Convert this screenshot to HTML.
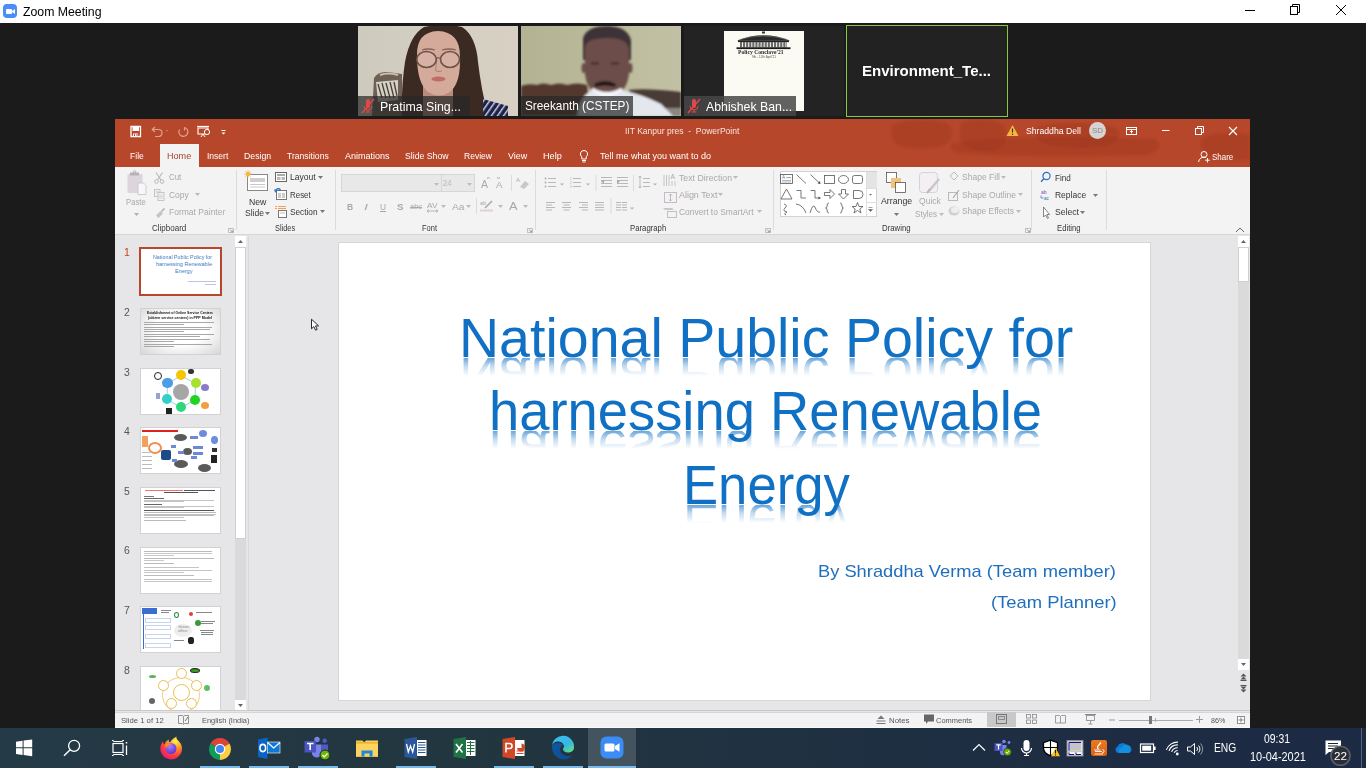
<!DOCTYPE html><html><head><meta charset="utf-8"><style>
html,body{margin:0;padding:0;width:1366px;height:768px;overflow:hidden;background:#1b1b1b;position:relative}
div,span,svg{position:absolute;box-sizing:border-box}
.t{white-space:pre;line-height:1;font-family:"Liberation Sans",sans-serif}
svg text{font-family:"Liberation Sans",sans-serif}
</style></head><body>
<div style="left:0px;top:0px;width:1366px;height:23px;background:#fff"></div>
<div style="left:3px;top:4px;width:14px;height:14px;background:#4a8ef7;border-radius:4px"></div>
<svg style="left:3px;top:4px;" width="14" height="14" viewBox="0 0 14 14"><rect x="3" y="5" width="6" height="5" rx="1" fill="#fff"/><path d="M9 7 L12 5 L12 10 L9 8Z" fill="#fff"/></svg>
<span class="t" style="left:23px;top:6.00px;font-size:12.3px;color:#000;transform:scaleX(0.9986);transform-origin:0 0;">Zoom Meeting</span>
<svg style="left:1240px;top:0px;" width="126" height="23" viewBox="0 0 126 23"><path d="M5 10.5H15" stroke="#000" stroke-width="1"/><rect x="50.5" y="6.5" width="7" height="8" fill="none" stroke="#000"/><path d="M52.5 6.5V4.5H59.5V12.5H57.5" fill="none" stroke="#000"/><path d="M96 5L106 15M106 5L96 15" stroke="#000" stroke-width="1"/></svg>
<svg style="left:358px;top:26px" width="160" height="90" viewBox="0 0 160 90"><defs><linearGradient id="v1bg" x1="0" x2="1"><stop offset="0" stop-color="#cecbbe"/><stop offset=".5" stop-color="#d3cfc2"/><stop offset="1" stop-color="#d8d0c2"/></linearGradient><filter id="bl1"><feGaussianBlur stdDeviation=".7"/></filter><pattern id="stp" width="5" height="5" patternUnits="userSpaceOnUse" patternTransform="rotate(35)"><rect width="5" height="5" fill="#1e2248"/><rect width="1.5" height="5" fill="#c8cce0"/></pattern></defs><rect width="160" height="90" fill="url(#v1bg)"/><g filter="url(#bl1)"><path d="M14 90L16 52Q20 45 30 46L44 48V90Z" fill="#6e6052"/><path d="M18 56L40 54V74L20 76Z" fill="#d4d0c6"/><path d="M20 58L24 72M24 57L28 72M28 57L32 72M32 56L36 72M36 56L39 70" stroke="#4a3e36" stroke-width="1.3"/><path d="M22 49Q30 46 40 49" stroke="#c8c0b0" stroke-width="2" fill="none"/><path d="M66 1Q86 -4 104 1Q118 10 120 36Q123 62 130 90H44Q43 62 47 36Q52 9 66 1Z" fill="#3a2a24"/><path d="M125 73L150 80V90H125Z" fill="url(#stp)"/><rect x="65" y="58" width="30" height="32" fill="#b98b7d"/><path d="M59 30Q58 6 80 5Q102 6 102 30Q103 57 92 66Q81 73 70 66Q59 57 59 30Z" fill="#d4aa9a"/><path d="M64 24Q70 22 77 24M84 24Q91 22 98 24" stroke="#8a6258" stroke-width="1.3" fill="none"/><path d="M79 34Q77 42 78 45Q81 46 84 45" stroke="#b08070" stroke-width="1" fill="none"/><ellipse cx="80.5" cy="53" rx="7" ry="2.4" fill="#bf6e66"/></g><ellipse cx="68.5" cy="33.5" rx="9.8" ry="8" fill="#e0c8c0" fill-opacity=".25" stroke="#6b5046" stroke-width="1.6"/><ellipse cx="92" cy="33.5" rx="9.5" ry="8" fill="#e0c8c0" fill-opacity=".25" stroke="#6b5046" stroke-width="1.6"/><path d="M78.3 32.5Q80 31 82.5 32.5" stroke="#6b5046" stroke-width="1.2" fill="none"/></svg>
<div style="left:358px;top:96px;width:112px;height:20px;background:rgba(40,40,40,.72)"></div>
<svg style="left:360px;top:98px;" width="16" height="16" viewBox="0 0 16 16"><path d="M6 3a2 2 0 0 1 4 0v5a2 2 0 0 1-4 0z" fill="#e04848"/><path d="M4 8a4 4 0 0 0 8 0M8 12v2M5.5 14h5" stroke="#e04848" fill="none"/><path d="M2 15L14 1" stroke="#e04848" stroke-width="1.5"/></svg>
<span class="t" style="left:380px;top:101.00px;font-size:12.4px;color:#fff;transform:scaleX(0.9961);transform-origin:0 0;">Pratima Sing...</span>
<svg style="left:521px;top:26px" width="160" height="90" viewBox="0 0 160 90"><defs><linearGradient id="v2bg" x1="0" x2="1"><stop offset="0" stop-color="#b3b393"/><stop offset=".55" stop-color="#bbba9a"/><stop offset="1" stop-color="#c3c1a5"/></linearGradient><filter id="bl2"><feGaussianBlur stdDeviation=".8"/></filter></defs><rect width="160" height="90" fill="url(#v2bg)"/><g filter="url(#bl2)"><path d="M0 60Q8 57 16 59Q22 56 30 59Q38 56 46 59Q56 56 66 59L70 90H0Z" fill="#52392f"/><path d="M108 64Q125 62 160 66V90H108Z" fill="#4a3a36"/><path d="M145 82H160V90H145Z" fill="#8a8680"/><path d="M62 12Q66 0 86 0Q106 0 110 14L110 34H62Z" fill="#3c3038"/><path d="M64 22Q64 12 86 12Q108 12 108 24V48Q106 66 92 70Q86 72 80 70Q66 66 64 48Z" fill="#6c4e48"/><ellipse cx="62.5" cy="42" rx="2" ry="5" fill="#6c4e48"/><ellipse cx="109.5" cy="42" rx="2" ry="5" fill="#6c4e48"/><path d="M70 37.5H78M90 37.5H98" stroke="#3a2a2a" stroke-width="2"/><path d="M73 58Q84 52 95 58L94 61Q84 58 74 61Z" fill="#241818"/><path d="M56 90Q58 70 72 64L86 72L100 64Q120 68 140 78L152 90Z" fill="#e4e8ee"/><path d="M70 64L86 74L102 64L100 62Q86 70 72 62Z" fill="#f4f6fa"/></g></svg>
<div style="left:521px;top:96px;width:112px;height:20px;background:rgba(40,40,40,.72)"></div>
<span class="t" style="left:525px;top:100.00px;font-size:12.4px;color:#fff;transform:scaleX(0.9528);transform-origin:0 0;">Sreekanth (CSTEP)</span>
<div style="left:684px;top:26px;width:160px;height:90px;background:#232323"></div>
<div style="left:724px;top:31px;width:80px;height:80px;background:#fbfbf3"></div>
<svg style="left:724px;top:31px;" width="80" height="30" viewBox="0 0 80 30"><path d="M13 9.5 Q39.5 -1 66 9.5Z" fill="#2a2a2a"/><path d="M16 8.5 Q39.5 1.5 63 8.5" fill="none" stroke="#888" stroke-width=".5"/><rect x="38" y="0.5" width="3" height="2" fill="#333"/><rect x="14" y="9.3" width="51" height="1.8" fill="#222"/><rect x="16" y="11" width="47" height="5.5" fill="#6a6a6a"/><g stroke="#f4f4ee" stroke-width="1"><path d="M18.5 11.3V16.3"/><path d="M21.6 11.3V16.3"/><path d="M24.7 11.3V16.3"/><path d="M27.8 11.3V16.3"/><path d="M30.9 11.3V16.3"/><path d="M34.0 11.3V16.3"/><path d="M37.1 11.3V16.3"/><path d="M40.2 11.3V16.3"/><path d="M43.3 11.3V16.3"/><path d="M46.4 11.3V16.3"/><path d="M49.5 11.3V16.3"/><path d="M52.6 11.3V16.3"/><path d="M55.7 11.3V16.3"/><path d="M58.8 11.3V16.3"/><path d="M61.9 11.3V16.3"/></g><rect x="12.5" y="16.3" width="54" height="1.8" fill="#1a1a1a"/></svg>
<span class="t" style="left:738px;top:49.00px;font-size:6px;color:#2a2a2a;font-weight:bold;transform:scaleX(0.9424);transform-origin:0 0;font-family:'Liberation Serif'">Policy Conclave'21</span>
<span class="t" style="left:752px;top:56.00px;font-size:3px;color:#555;transform:scaleX(1.0321);transform-origin:0 0;">9th - 12th April'21</span>
<div style="left:684px;top:96px;width:112px;height:20px;background:rgba(70,70,70,.85)"></div>
<svg style="left:686px;top:98px;" width="16" height="16" viewBox="0 0 16 16"><path d="M6 3a2 2 0 0 1 4 0v5a2 2 0 0 1-4 0z" fill="#e04848"/><path d="M4 8a4 4 0 0 0 8 0M8 12v2M5.5 14h5" stroke="#e04848" fill="none"/><path d="M2 15L14 1" stroke="#e04848" stroke-width="1.5"/></svg>
<span class="t" style="left:706px;top:101.00px;font-size:12.4px;color:#fff;transform:scaleX(0.9925);transform-origin:0 0;">Abhishek Ban...</span>
<div style="left:846px;top:25px;width:162px;height:92px;background:#222;border:1.5px solid #8cc63f;box-sizing:border-box"></div>
<span class="t" style="left:862px;top:63.00px;font-size:15px;color:#fff;font-weight:bold;transform:scaleX(1.0007);transform-origin:0 0;">Environment_Te...</span>
<div style="left:115px;top:119px;width:1135px;height:609px;background:#e6e6e8"></div>
<div style="left:115px;top:119px;width:1135px;height:48px;background:#b7472a;overflow:hidden"><svg style="left:0;top:0;filter:blur(1px)" width="1135" height="48"><g fill="#8a2a18" fill-opacity=".22"><path d="M778 6C790 0 826 -1 834 6C840 14 836 26 824 28C806 31 782 30 779 22C776 16 774 10 778 6Z"/><path d="M846 4C856 -2 884 0 890 8C894 18 890 30 876 32C860 33 846 28 845 18Z"/><path d="M838 24C870 18 960 16 1040 20C1048 26 1044 34 1030 36C980 38 880 38 842 34C834 31 834 27 838 24Z"/><path d="M922 8C940 2 990 3 1002 10C1008 18 1000 27 984 28C956 30 928 28 922 20Z"/><path d="M1088 20C1096 12 1130 12 1140 18L1140 40C1120 42 1096 40 1090 34C1084 28 1084 24 1088 20Z"/></g></svg></div>
<svg style="left:128px;top:124px;" width="100" height="16" viewBox="0 0 100 16"><path d="M3 2.5H12.5V12.5H3Z" fill="none" stroke="#fff" stroke-width="1.3"/><rect x="4.5" y="3" width="6.5" height="4" fill="#fff"/><rect x="5" y="9.5" width="5" height="3" fill="#fff"/><rect x="6" y="10" width="1" height="2" fill="#b7472a"/><rect x="8.5" y="10" width="1" height="2" fill="#b7472a"/><path d="M25 5.5H30.5A3.5 3.5 0 0 1 30.5 12.5H27" fill="none" stroke="#e0a090" stroke-width="1.2"/><path d="M27 3L24.3 5.5L27 8" fill="none" stroke="#e0a090" stroke-width="1.2"/><path d="M38 6L40 6L39 7.2Z" fill="#e0a090"/><path d="M56.5 3.5A4.5 4.5 0 1 1 51.5 5.5" fill="none" stroke="#e0a090" stroke-width="1.2"/><path d="M56.5 3.2V6.5" stroke="#e0a090" stroke-width="1.2"/><path d="M69 2.5H81" stroke="#fff" stroke-width="1.2"/><path d="M70 4H80V10H70Z" fill="none" stroke="#fff" stroke-width="1.1"/><circle cx="79" cy="8" r="2.6" fill="#b7472a" stroke="#fff" stroke-width="1"/><path d="M75 10L73 13M75 10L77 13" stroke="#fff"/><path d="M93.5 6.5H97.5" stroke="#fff"/><path d="M93.5 8.5L97.5 8.5L95.5 10.5Z" fill="#fff"/></svg>
<span class="t" style="left:624.8px;top:127.00px;font-size:9px;color:#f8e4de;transform:scaleX(0.9456);transform-origin:0 0;">IIT Kanpur pres  -  PowerPoint</span>
<svg style="left:1006px;top:124px;" width="14" height="13" viewBox="0 0 14 13"><path d="M6.5 1L12.5 12H0.5Z" fill="#f6b73c"/><path d="M6.5 4.5V8.5M6.5 9.8V11" stroke="#333" stroke-width="1.2"/></svg>
<span class="t" style="left:1025.6px;top:127.00px;font-size:9px;color:#fff;transform:scaleX(0.9626);transform-origin:0 0;">Shraddha Dell</span>
<div style="left:1089px;top:121.5px;width:17.4px;height:17.4px;border-radius:50%;background:#d6d3d2"></div>
<span class="t" style="left:1092px;top:127.00px;font-size:7.5px;color:#8a8a8a;transform:scaleX(1.0557);transform-origin:0 0;">SD</span>
<svg style="left:1120px;top:122px;" width="130" height="18" viewBox="0 0 130 18"><rect x="6.5" y="5.5" width="10" height="7" fill="none" stroke="#fff"/><path d="M6.5 7.5H16.5" stroke="#fff"/><path d="M11.5 8.5V11.5M10 10L11.5 8.5L13 10" stroke="#fff" fill="none"/><path d="M42 8.5H49.5" stroke="#fff" stroke-width="1"/><rect x="75.5" y="6.5" width="6" height="6" fill="none" stroke="#fff"/><path d="M77.5 6.5V4.5H83.5V10.5H81.5" fill="none" stroke="#fff"/><path d="M109 5L117 13M117 5L109 13" stroke="#fff" stroke-width="1.1"/></svg>
<div style="left:160px;top:144px;width:39px;height:23px;background:#f3f3f3"></div>
<span class="t" style="left:129.6px;top:152.00px;font-size:9px;color:#fff;transform:scaleX(0.9516);transform-origin:0 0;">File</span>
<span class="t" style="left:207.2px;top:152.00px;font-size:9px;color:#fff;transform:scaleX(0.9464);transform-origin:0 0;">Insert</span>
<span class="t" style="left:244.4px;top:152.00px;font-size:9px;color:#fff;transform:scaleX(0.9674);transform-origin:0 0;">Design</span>
<span class="t" style="left:287.4px;top:152.00px;font-size:9px;color:#fff;transform:scaleX(0.9547);transform-origin:0 0;">Transitions</span>
<span class="t" style="left:345px;top:152.00px;font-size:9px;color:#fff;transform:scaleX(1.0018);transform-origin:0 0;">Animations</span>
<span class="t" style="left:405px;top:152.00px;font-size:9px;color:#fff;transform:scaleX(0.9661);transform-origin:0 0;">Slide Show</span>
<span class="t" style="left:464.3px;top:152.00px;font-size:9px;color:#fff;transform:scaleX(0.9489);transform-origin:0 0;">Review</span>
<span class="t" style="left:507.7px;top:152.00px;font-size:9px;color:#fff;transform:scaleX(0.9977);transform-origin:0 0;">View</span>
<span class="t" style="left:542.8px;top:152.00px;font-size:9px;color:#fff;transform:scaleX(1.0157);transform-origin:0 0;">Help</span>
<span class="t" style="left:167.2px;top:152.00px;font-size:9px;color:#a5452c;transform:scaleX(1.0081);transform-origin:0 0;">Home</span>
<svg style="left:579px;top:149px;" width="10" height="14" viewBox="0 0 10 14"><path d="M5 1.5A3.5 3.5 0 0 0 2.8 7.8V10H7.2V7.8A3.5 3.5 0 0 0 5 1.5Z" fill="none" stroke="#fff" stroke-width="1"/><path d="M3 11.5H7M3.5 13H6.5" stroke="#fff"/></svg>
<span class="t" style="left:600.1px;top:152.00px;font-size:9px;color:#fff;transform:scaleX(1.0004);transform-origin:0 0;">Tell me what you want to do</span>
<svg style="left:1197px;top:150px;" width="14" height="13" viewBox="0 0 14 13"><circle cx="7" cy="4.5" r="3" fill="none" stroke="#fff"/><path d="M1.5 12A5.5 5.5 0 0 1 9 7.5" fill="none" stroke="#fff"/><path d="M10.5 8V12.5M8.2 10.2H12.8" stroke="#fff"/></svg>
<span class="t" style="left:1212px;top:153.00px;font-size:9px;color:#fff;transform:scaleX(0.8870);transform-origin:0 0;">Share</span>
<div style="left:115px;top:167px;width:1135px;height:67px;background:#f3f3f3"></div>
<div style="left:115px;top:234px;width:1135px;height:1px;background:#d6d6d6"></div>
<div style="left:235.9px;top:170px;width:1px;height:60px;background:#dcdcdc"></div>
<div style="left:335.2px;top:170px;width:1px;height:60px;background:#dcdcdc"></div>
<div style="left:535.4px;top:170px;width:1px;height:60px;background:#dcdcdc"></div>
<div style="left:772.6px;top:170px;width:1px;height:60px;background:#dcdcdc"></div>
<div style="left:1031.3px;top:170px;width:1px;height:60px;background:#dcdcdc"></div>
<div style="left:1106px;top:170px;width:1px;height:60px;background:#dcdcdc"></div>
<span class="t" style="left:151.7px;top:224.00px;font-size:9px;color:#363636;transform:scaleX(0.8904);transform-origin:0 0;">Clipboard</span>
<span class="t" style="left:275px;top:224.00px;font-size:9px;color:#363636;transform:scaleX(0.8200);transform-origin:0 0;">Slides</span>
<span class="t" style="left:421.8px;top:224.00px;font-size:9px;color:#363636;transform:scaleX(0.8330);transform-origin:0 0;">Font</span>
<span class="t" style="left:629.7px;top:224.00px;font-size:9px;color:#363636;transform:scaleX(0.8614);transform-origin:0 0;">Paragraph</span>
<span class="t" style="left:881.7px;top:224.00px;font-size:9px;color:#363636;transform:scaleX(0.8664);transform-origin:0 0;">Drawing</span>
<span class="t" style="left:1056.6px;top:224.00px;font-size:9px;color:#363636;transform:scaleX(0.8576);transform-origin:0 0;">Editing</span>
<svg style="left:227.5px;top:228px;" width="6" height="5" viewBox="0 0 6 5"><path d="M0.5 0.5H5.5V4.5H0.5Z" fill="none" stroke="#a8a8a8" stroke-width=".7"/><path d="M1.8 1.6L4.5 3.9M4.5 2.4V3.9H3" stroke="#888" stroke-width=".7" fill="none"/></svg>
<svg style="left:527px;top:228px;" width="6" height="5" viewBox="0 0 6 5"><path d="M0.5 0.5H5.5V4.5H0.5Z" fill="none" stroke="#a8a8a8" stroke-width=".7"/><path d="M1.8 1.6L4.5 3.9M4.5 2.4V3.9H3" stroke="#888" stroke-width=".7" fill="none"/></svg>
<svg style="left:764.5px;top:228px;" width="6" height="5" viewBox="0 0 6 5"><path d="M0.5 0.5H5.5V4.5H0.5Z" fill="none" stroke="#a8a8a8" stroke-width=".7"/><path d="M1.8 1.6L4.5 3.9M4.5 2.4V3.9H3" stroke="#888" stroke-width=".7" fill="none"/></svg>
<svg style="left:1025px;top:228px;" width="6" height="5" viewBox="0 0 6 5"><path d="M0.5 0.5H5.5V4.5H0.5Z" fill="none" stroke="#a8a8a8" stroke-width=".7"/><path d="M1.8 1.6L4.5 3.9M4.5 2.4V3.9H3" stroke="#888" stroke-width=".7" fill="none"/></svg>
<svg style="left:126px;top:170px;" width="24" height="26" viewBox="0 0 24 26"><rect x="1.5" y="4" width="15" height="19" rx="1" fill="#dcd6dc"/><rect x="4" y="2.5" width="9" height="3" fill="#b8b0b8"/><circle cx="8.5" cy="2" r="1.3" fill="none" stroke="#b8b0b8"/><path d="M12 13H17.5L20 15.5V24.5H12Z" fill="#f8f6f8" stroke="#c8c0c8" stroke-width=".8"/></svg>
<span class="t" style="left:126.4px;top:198.00px;font-size:9px;color:#a9a9a9;transform:scaleX(0.8560);transform-origin:0 0;">Paste</span>
<svg style="left:133.5px;top:212.5px;" width="5" height="3" viewBox="0 0 5 3"><path d="M0 0H5L2.5 3Z" fill="#b0b0b0"/></svg>
<svg style="left:153px;top:172px;" width="14" height="48" viewBox="0 0 14 48"><circle cx="3.5" cy="9.5" r="1.8" fill="none" stroke="#b8b8b8"/><circle cx="9" cy="9.5" r="1.8" fill="none" stroke="#b8b8b8"/><path d="M4.5 8L9.5 0.5M8 8L3 0.5" stroke="#b8b8b8" stroke-width="1.1"/><rect x="1.5" y="17.5" width="5.5" height="7" fill="#f3f3f3" stroke="#bbb" stroke-width=".8"/><path d="M2.5 19.5H6M2.5 21H6" stroke="#ccc" stroke-width=".6"/><rect x="5" y="20.5" width="6" height="8" fill="#f3f3f3" stroke="#bbb" stroke-width=".8"/><path d="M6 23H10M6 24.5H10M6 26H10" stroke="#c8c8c8" stroke-width=".6"/><path d="M3 43.5L7.5 39L10 41.5L5.5 46Z" fill="#c4c4c4"/><path d="M8.5 39.5L11.5 36.5" stroke="#b0b0b0" stroke-width="1.6"/></svg>
<span class="t" style="left:168.5px;top:173.00px;font-size:9px;color:#a9a9a9;transform:scaleX(0.8711);transform-origin:0 0;">Cut</span>
<span class="t" style="left:168.5px;top:191.00px;font-size:9px;color:#a9a9a9;transform:scaleX(0.9377);transform-origin:0 0;">Copy</span>
<svg style="left:195.0px;top:193.0px;" width="5" height="3" viewBox="0 0 5 3"><path d="M0 0H5L2.5 3Z" fill="#b8b8b8"/></svg>
<span class="t" style="left:168.5px;top:208.00px;font-size:9px;color:#a9a9a9;transform:scaleX(0.9460);transform-origin:0 0;">Format Painter</span>
<svg style="left:244px;top:170px;" width="26" height="22" viewBox="0 0 26 22"><rect x="3.5" y="4.5" width="20" height="16" fill="#fff" stroke="#888"/><rect x="6" y="8" width="15" height="4" fill="#cfcfcf"/><path d="M6 14.5H21M6 17H21" stroke="#c8c8c8"/><circle cx="4" cy="4" r="2.2" fill="#f2b84b"/><path d="M4 0V8M0 4H8M1.2 1.2L6.8 6.8M6.8 1.2L1.2 6.8" stroke="#f2b84b" stroke-width=".8"/></svg>
<span class="t" style="left:248.8px;top:198.00px;font-size:9px;color:#363636;transform:scaleX(0.9664);transform-origin:0 0;">New</span>
<span class="t" style="left:244.6px;top:209.00px;font-size:9px;color:#363636;transform:scaleX(0.9494);transform-origin:0 0;">Slide</span>
<svg style="left:264.5px;top:212.0px;" width="5" height="3" viewBox="0 0 5 3"><path d="M0 0H5L2.5 3Z" fill="#777"/></svg>
<svg style="left:274px;top:171px;" width="14" height="48" viewBox="0 0 14 48"><rect x="1.5" y="1.5" width="11" height="9" fill="#fff" stroke="#666"/><rect x="3" y="3" width="8" height="2" fill="#aaa"/><rect x="3" y="6" width="3.5" height="3" fill="#bbb"/><rect x="7.5" y="6" width="3.5" height="3" fill="#bbb"/><rect x="2.5" y="19.5" width="10" height="9" fill="#fff" stroke="#777"/><rect x="4" y="22" width="3" height="5" fill="#ccc"/><rect x="8" y="22" width="3" height="5" fill="#ccc"/><path d="M1.2 20.5A3 3 0 0 1 6.5 18.8" stroke="#2e75d0" stroke-width="1.4" fill="none"/><path d="M0 18.5L1.5 21.8L3.5 19Z" fill="#2e75d0"/><path d="M1 35.5H3M4 35.5H12M1 37.5H3M4 37.5H12" stroke="#f0a050" stroke-width="1.2"/><rect x="4.5" y="39.5" width="8" height="7" fill="#fff" stroke="#777"/><path d="M6 42H11" stroke="#bbb"/></svg>
<span class="t" style="left:289.6px;top:173.00px;font-size:9px;color:#363636;transform:scaleX(0.9512);transform-origin:0 0;">Layout</span>
<svg style="left:317.5px;top:176.0px;" width="5" height="3" viewBox="0 0 5 3"><path d="M0 0H5L2.5 3Z" fill="#777"/></svg>
<span class="t" style="left:289.6px;top:191.00px;font-size:9px;color:#363636;transform:scaleX(0.8805);transform-origin:0 0;">Reset</span>
<span class="t" style="left:289.6px;top:208.00px;font-size:9px;color:#363636;transform:scaleX(0.9161);transform-origin:0 0;">Section</span>
<svg style="left:319.5px;top:210.0px;" width="5" height="3" viewBox="0 0 5 3"><path d="M0 0H5L2.5 3Z" fill="#777"/></svg>
<div style="left:341px;top:174px;width:101px;height:18px;background:#e8e8e8;border:1px solid #d6d6d6"></div>
<div style="left:441px;top:174px;width:34px;height:18px;background:#e8e8e8;border:1px solid #d6d6d6"></div>
<svg style="left:433.5px;top:182.5px;" width="5" height="3" viewBox="0 0 5 3"><path d="M0 0H5L2.5 3Z" fill="#bdbdbd"/></svg>
<svg style="left:467.0px;top:182.5px;" width="5" height="3" viewBox="0 0 5 3"><path d="M0 0H5L2.5 3Z" fill="#bdbdbd"/></svg>
<span class="t" style="left:443.4px;top:179.00px;font-size:9px;color:#b9b9b9;transform:scaleX(0.8492);transform-origin:0 0;">24</span>
<span class="t" style="left:480.6px;top:180.00px;font-size:10px;color:#aaa;transform:scaleX(1.0494);transform-origin:0 0;">A</span>
<span class="t" style="left:496.4px;top:181.00px;font-size:9px;color:#aaa;transform:scaleX(1.0827);transform-origin:0 0;">A</span>
<svg style="left:486px;top:176px;" width="20" height="4" viewBox="0 0 20 4"><path d="M1 3L2.5 1L4 3M11 1L12.5 3L14 1" stroke="#aaa" fill="none" stroke-width=".8"/></svg>
<div style="left:510.7px;top:175px;width:1px;height:16px;background:#dcdcdc"></div>
<svg style="left:516px;top:176px;" width="14" height="14" viewBox="0 0 14 14"><text x="0" y="6" font-size="6" fill="#aaa" font-family="Liberation Sans">A</text><path d="M4 11L9 5L13 8L8 13Z" fill="#c8c8c8"/></svg>
<span class="t" style="left:346.7px;top:202.00px;font-size:9.5px;color:#a8a8a8;transform:scaleX(0.8995);transform-origin:0 0;font-weight:bold">B</span>
<span class="t" style="left:364.3px;top:202.00px;font-size:9.5px;color:#a8a8a8;transform:scaleX(1.5156);transform-origin:0 0;font-style:italic">I</span>
<span class="t" style="left:380px;top:202.00px;font-size:9.5px;color:#a8a8a8;transform:scaleX(0.8745);transform-origin:0 0;text-decoration:underline">U</span>
<span class="t" style="left:396.6px;top:202.00px;font-size:9.5px;color:#a8a8a8;transform:scaleX(1.0258);transform-origin:0 0;font-weight:bold">S</span>
<span class="t" style="left:410px;top:203.00px;font-size:7px;color:#aaa;transform:scaleX(1.0633);transform-origin:0 0;text-decoration:line-through">abc</span>
<span class="t" style="left:427.3px;top:202.00px;font-size:8px;color:#aaa;transform:scaleX(1.0418);transform-origin:0 0;">AV</span>
<svg style="left:426px;top:209px;" width="13" height="4" viewBox="0 0 13 4"><path d="M1 2H12M1 2L3 0.5M1 2L3 3.5M12 2L10 0.5M12 2L10 3.5" stroke="#aaa" stroke-width=".8" fill="none"/></svg>
<svg style="left:440.5px;top:204.5px;" width="5" height="3" viewBox="0 0 5 3"><path d="M0 0H5L2.5 3Z" fill="#bbb"/></svg>
<span class="t" style="left:452.4px;top:203.00px;font-size:9px;color:#aaa;transform:scaleX(1.1355);transform-origin:0 0;">Aa</span>
<svg style="left:465.5px;top:204.5px;" width="5" height="3" viewBox="0 0 5 3"><path d="M0 0H5L2.5 3Z" fill="#bbb"/></svg>
<div style="left:476.4px;top:198px;width:1px;height:16px;background:#dcdcdc"></div>
<svg style="left:480px;top:199px;" width="15" height="13" viewBox="0 0 15 13"><text x="0" y="5.5" font-size="5.5" fill="#aaa" font-family="Liberation Sans">ab</text><path d="M5 9L12 2" stroke="#aaa" stroke-width="1.6"/><rect x="0" y="10.5" width="13" height="2" fill="#e0d0dc"/></svg>
<svg style="left:497.5px;top:204.5px;" width="5" height="3" viewBox="0 0 5 3"><path d="M0 0H5L2.5 3Z" fill="#bbb"/></svg>
<span class="t" style="left:509.2px;top:201.00px;font-size:10.5px;color:#a8a8a8;transform:scaleX(1.2136);transform-origin:0 0;">A</span>
<svg style="left:522.5px;top:204.5px;" width="5" height="3" viewBox="0 0 5 3"><path d="M0 0H5L2.5 3Z" fill="#bbb"/></svg>
<svg style="left:540px;top:172px;" width="130" height="46" viewBox="0 0 130 46"><circle cx="5.5" cy="6.5" r=".9" fill="#aaa"/><circle cx="5.5" cy="10.5" r=".9" fill="#aaa"/><circle cx="5.5" cy="14.5" r=".9" fill="#aaa"/><rect x="8" y="6" width="8" height="1" fill="#b8b8b8"/><rect x="8" y="10" width="8" height="1" fill="#b8b8b8"/><rect x="8" y="14" width="8" height="1" fill="#b8b8b8"/><path d="M20 11.5H24L22 13.5Z" fill="#b0b0b0"/><text x="30" y="8" font-size="3" fill="#aaa">1</text><text x="30" y="12" font-size="3" fill="#aaa">2</text><text x="30" y="16" font-size="3" fill="#aaa">3</text><rect x="33" y="6" width="8" height="1" fill="#b8b8b8"/><rect x="33" y="10" width="8" height="1" fill="#b8b8b8"/><rect x="33" y="14" width="8" height="1" fill="#b8b8b8"/><path d="M46 11.5H50L48 13.5Z" fill="#b0b0b0"/><rect x="55.5" y="3" width="1" height="16" fill="#dcdcdc"/><rect x="61" y="5" width="11" height="1" fill="#b8b8b8"/><rect x="61" y="8" width="11" height="1" fill="#b8b8b8"/><rect x="61" y="11" width="11" height="1" fill="#b8b8b8"/><rect x="61" y="14" width="11" height="1" fill="#b8b8b8"/><path d="M61 9.5L64 7.5V11.5Z" fill="#aaa"/><rect x="77" y="5" width="11" height="1" fill="#b8b8b8"/><rect x="77" y="8" width="11" height="1" fill="#b8b8b8"/><rect x="77" y="11" width="11" height="1" fill="#b8b8b8"/><rect x="77" y="14" width="11" height="1" fill="#b8b8b8"/><path d="M80 9.5L77 7.5V11.5Z" fill="#aaa"/><rect x="93" y="3" width="1" height="16" fill="#dcdcdc"/><rect x="103" y="6" width="7" height="1" fill="#b8b8b8"/><rect x="103" y="10" width="7" height="1" fill="#b8b8b8"/><rect x="103" y="14" width="7" height="1" fill="#b8b8b8"/><path d="M100 4V16M98.5 5.5L100 4L101.5 5.5M98.5 14.5L100 16L101.5 14.5" stroke="#aaa" fill="none" stroke-width=".8"/><path d="M113 11.5H117L115 13.5Z" fill="#b0b0b0"/><rect x="6" y="30.0" width="9" height="1" fill="#b8b8b8"/><rect x="6" y="32.5" width="6" height="1" fill="#b8b8b8"/><rect x="6" y="35.0" width="9" height="1" fill="#b8b8b8"/><rect x="6" y="37.5" width="6" height="1" fill="#b8b8b8"/><rect x="22.0" y="30.0" width="9" height="1" fill="#b8b8b8"/><rect x="23.5" y="32.5" width="6" height="1" fill="#b8b8b8"/><rect x="22.0" y="35.0" width="9" height="1" fill="#b8b8b8"/><rect x="23.5" y="37.5" width="6" height="1" fill="#b8b8b8"/><rect x="39" y="30.0" width="9" height="1" fill="#b8b8b8"/><rect x="42" y="32.5" width="6" height="1" fill="#b8b8b8"/><rect x="39" y="35.0" width="9" height="1" fill="#b8b8b8"/><rect x="42" y="37.5" width="6" height="1" fill="#b8b8b8"/><rect x="55" y="30.0" width="9" height="1" fill="#b8b8b8"/><rect x="55" y="32.5" width="9" height="1" fill="#b8b8b8"/><rect x="55" y="35.0" width="9" height="1" fill="#b8b8b8"/><rect x="55" y="37.5" width="9" height="1" fill="#b8b8b8"/><rect x="70.5" y="26" width="1" height="16" fill="#dcdcdc"/><rect x="76" y="30.0" width="5" height="1" fill="#b8b8b8"/><rect x="76" y="32.5" width="5" height="1" fill="#b8b8b8"/><rect x="76" y="35.0" width="5" height="1" fill="#b8b8b8"/><rect x="76" y="37.5" width="5" height="1" fill="#b8b8b8"/><rect x="82" y="30.0" width="5" height="1" fill="#b8b8b8"/><rect x="82" y="32.5" width="5" height="1" fill="#b8b8b8"/><rect x="82" y="35.0" width="5" height="1" fill="#b8b8b8"/><rect x="82" y="37.5" width="5" height="1" fill="#b8b8b8"/><path d="M90 35.5H94L92 37.5Z" fill="#b0b0b0"/></svg>
<svg style="left:662px;top:172px;" width="17" height="48" viewBox="0 0 17 48"><path d="M2 3V14M4.5 3V14M7 3V14" stroke="#b8b8b8" stroke-width=".8"/><text x="8.5" y="7" font-size="6.5" fill="#aaa">A</text><path d="M10 9V14M13 9V14" stroke="#bbb" stroke-width=".8"/><rect x="2.5" y="20.5" width="12" height="10" fill="none" stroke="#c8b8c8"/><path d="M8.5 22V29M7 23.5L8.5 22L10 23.5M7 27.5L8.5 29L10 27.5" stroke="#aaa" fill="none" stroke-width=".8"/><path d="M1 36H10L12 38H3Z" fill="#c8c8c8"/><rect x="5.5" y="39.5" width="9" height="6" fill="#f3f3f3" stroke="#c0c0c0"/></svg>
<span class="t" style="left:678.5px;top:174.00px;font-size:9px;color:#a9a9a9;transform:scaleX(0.9722);transform-origin:0 0;">Text Direction</span>
<svg style="left:732.5px;top:176.0px;" width="5" height="3" viewBox="0 0 5 3"><path d="M0 0H5L2.5 3Z" fill="#bbb"/></svg>
<span class="t" style="left:678.5px;top:191.00px;font-size:9px;color:#a9a9a9;transform:scaleX(0.9909);transform-origin:0 0;">Align Text</span>
<svg style="left:717.5px;top:193.0px;" width="5" height="3" viewBox="0 0 5 3"><path d="M0 0H5L2.5 3Z" fill="#bbb"/></svg>
<span class="t" style="left:678.5px;top:208.00px;font-size:9px;color:#a9a9a9;transform:scaleX(0.9369);transform-origin:0 0;">Convert to SmartArt</span>
<svg style="left:756.5px;top:210.0px;" width="5" height="3" viewBox="0 0 5 3"><path d="M0 0H5L2.5 3Z" fill="#bbb"/></svg>
<div style="left:779.5px;top:171.3px;width:97.5px;height:45.5px;background:#fff;border:1px solid #d2d2d2"></div>
<div style="left:866px;top:172px;width:10.5px;height:16px;background:#e4e4e4"></div>
<div style="left:866px;top:171.5px;width:1px;height:45px;background:#dedede"></div>
<div style="left:866px;top:187.5px;width:11px;height:1px;background:#dedede"></div>
<div style="left:866px;top:202px;width:11px;height:1px;background:#dedede"></div>
<svg style="left:779px;top:171px;" width="98" height="46" viewBox="0 0 98 46"><path d="M9 7.5L10.5 6L12 7.5" stroke="#bbb" fill="none"/><rect x="1.5" y="3.5" width="12" height="9" fill="none" stroke="#555" stroke-width=".8"/><text x="3" y="8" font-size="4.5" fill="#2e75d0">A</text><path d="M7 6.5H12M3 9.5H12M3 11H12" stroke="#888" stroke-width=".6"/><path d="M17.5 3.5L27 12.5" stroke="#555" stroke-width=".8"/><path d="M31.5 3.5L41 12.5" stroke="#555" stroke-width=".8"/><path d="M41.5 13L38.5 12.5L41 10Z" fill="#555"/><rect x="45.5" y="4.5" width="10" height="8" fill="none" stroke="#555" stroke-width=".8"/><ellipse cx="64.5" cy="8.5" rx="5" ry="4" fill="none" stroke="#555" stroke-width=".8"/><rect x="73.5" y="4.5" width="10" height="8" rx="2" fill="none" stroke="#555" stroke-width=".8"/><path d="M2 28L7.5 18L13 28Z" fill="none" stroke="#555" stroke-width=".8"/><path d="M17.5 19.5H22V27H27" fill="none" stroke="#555" stroke-width=".8"/><path d="M31.5 19.5H36V27H41" fill="none" stroke="#555" stroke-width=".8"/><path d="M42 27L39.5 25.5V28.5Z" fill="#555"/><path d="M45.5 21.5H51V18.5L55.5 23L51 27.5V24.5H45.5Z" fill="none" stroke="#555" stroke-width=".8"/><path d="M62.5 18.5H66.5V23H69.5L64.5 28L59.5 23H62.5Z" fill="none" stroke="#555" stroke-width=".8"/><path d="M74.5 19.5H80A4 4 0 0 1 80 27.5H74.5V23Z" fill="none" stroke="#555" stroke-width=".8"/><path d="M5 33Q9 34 6 37Q3 40 8 41Q4 43 7 44" fill="none" stroke="#555" stroke-width=".8"/><path d="M17 33Q24 34 27 42" fill="none" stroke="#555" stroke-width=".8"/><path d="M31 42Q34 32 36 36Q38 42 41 41" fill="none" stroke="#555" stroke-width=".8"/><path d="M50 32Q48 32 48 35Q48 37 46.5 37Q48 37 48 39Q48 42 50 42" fill="none" stroke="#555" stroke-width=".8"/><path d="M61 32Q63 32 63 35Q63 37 64.5 37Q63 37 63 39Q63 42 61 42" fill="none" stroke="#555" stroke-width=".8"/><path d="M78.5 31.5L80 35.5H84L80.8 38L82 42L78.5 39.5L75 42L76.2 38L73 35.5H77Z" fill="none" stroke="#555" stroke-width=".8"/><path d="M90 23H93L91.5 24.5Z" fill="#666"/><path d="M89.5 36.5H93.5M89.5 38.5H93.5L91.5 40.5Z" fill="#666" stroke="#666" stroke-width=".6"/></svg>
<svg style="left:884px;top:171px;" width="26" height="24" viewBox="0 0 26 24"><rect x="2.5" y="1.5" width="10" height="10" fill="#fff" stroke="#555" stroke-width=".8"/><rect x="7" y="7" width="10" height="10" fill="#f0c27a"/><rect x="11.5" y="11.5" width="10" height="10" fill="#fff" stroke="#555" stroke-width=".8"/></svg>
<span class="t" style="left:880.7px;top:197.00px;font-size:9px;color:#363636;transform:scaleX(0.9745);transform-origin:0 0;">Arrange</span>
<svg style="left:893.5px;top:212.5px;" width="5" height="3" viewBox="0 0 5 3"><path d="M0 0H5L2.5 3Z" fill="#777"/></svg>
<svg style="left:917px;top:171px;" width="26" height="25" viewBox="0 0 26 25"><rect x="2.5" y="1.5" width="18" height="20" rx="3" fill="#f3eff3" stroke="#d8d0d8"/><path d="M12 20L22 8" stroke="#c8c8c8" stroke-width="2.5"/><path d="M10 22L13 18" stroke="#b8b8b8" stroke-width="2"/></svg>
<span class="t" style="left:918.6px;top:197.00px;font-size:9px;color:#a9a9a9;transform:scaleX(0.9476);transform-origin:0 0;">Quick</span>
<span class="t" style="left:914.7px;top:210.00px;font-size:9px;color:#a9a9a9;transform:scaleX(0.8977);transform-origin:0 0;">Styles</span>
<svg style="left:939.0px;top:212.5px;" width="5" height="3" viewBox="0 0 5 3"><path d="M0 0H5L2.5 3Z" fill="#bbb"/></svg>
<svg style="left:947px;top:171px;" width="14" height="48" viewBox="0 0 14 48"><path d="M3 5L7 1L11 5L7 9Z" fill="none" stroke="#bbb"/><path d="M2 11L11 11" stroke="#eee"/><rect x="1.5" y="21.5" width="9" height="8" fill="none" stroke="#bbb"/><path d="M6 27L12 19" stroke="#aaa" stroke-width="1.2"/><ellipse cx="7" cy="40" rx="5.5" ry="4.5" fill="#d0d0d0"/><ellipse cx="8" cy="39" rx="4" ry="3" fill="#eee"/></svg>
<span class="t" style="left:961.7px;top:173.00px;font-size:9px;color:#a9a9a9;transform:scaleX(0.9495);transform-origin:0 0;">Shape Fill</span>
<svg style="left:1000.5px;top:175.5px;" width="5" height="3" viewBox="0 0 5 3"><path d="M0 0H5L2.5 3Z" fill="#bbb"/></svg>
<span class="t" style="left:961.7px;top:191.00px;font-size:9px;color:#a9a9a9;transform:scaleX(0.9467);transform-origin:0 0;">Shape Outline</span>
<svg style="left:1017.5px;top:192.5px;" width="5" height="3" viewBox="0 0 5 3"><path d="M0 0H5L2.5 3Z" fill="#bbb"/></svg>
<span class="t" style="left:961.7px;top:207.00px;font-size:9px;color:#a9a9a9;transform:scaleX(0.9308);transform-origin:0 0;">Shape Effects</span>
<svg style="left:1015.5px;top:209.5px;" width="5" height="3" viewBox="0 0 5 3"><path d="M0 0H5L2.5 3Z" fill="#bbb"/></svg>
<svg style="left:1040px;top:171px;" width="12" height="48" viewBox="0 0 12 48"><circle cx="6.5" cy="5" r="3.6" fill="none" stroke="#2f6fc0" stroke-width="1.2"/><path d="M4 7.6L1 10.8" stroke="#2f6fc0" stroke-width="1.4"/><text x="1" y="23" font-size="5" fill="#7a4fb0" font-family="Liberation Sans">ab</text><text x="4" y="28.5" font-size="4.5" fill="#2f6fc0" font-family="Liberation Sans">ac</text><path d="M1 24.5V27H3.5" stroke="#2f6fc0" stroke-width=".7" fill="none"/><path d="M3.5 36V46L5.5 44L7.5 47.5L8.5 47L6.8 43.5H9.5Z" fill="#fff" stroke="#555" stroke-width=".7"/></svg>
<span class="t" style="left:1054.5px;top:174.00px;font-size:9px;color:#363636;transform:scaleX(0.9025);transform-origin:0 0;">Find</span>
<span class="t" style="left:1054.5px;top:191.00px;font-size:9px;color:#363636;transform:scaleX(0.9419);transform-origin:0 0;">Replace</span>
<svg style="left:1092.5px;top:193.5px;" width="5" height="3" viewBox="0 0 5 3"><path d="M0 0H5L2.5 3Z" fill="#777"/></svg>
<span class="t" style="left:1054.5px;top:208.00px;font-size:9px;color:#363636;transform:scaleX(0.9595);transform-origin:0 0;">Select</span>
<svg style="left:1079.5px;top:210.5px;" width="5" height="3" viewBox="0 0 5 3"><path d="M0 0H5L2.5 3Z" fill="#777"/></svg>
<svg style="left:1235px;top:227px;" width="10" height="6" viewBox="0 0 10 6"><path d="M1 5L5 1L9 5" fill="none" stroke="#555" stroke-width=".9"/></svg>
<div style="left:235px;top:236px;width:11px;height:475px;background:#dadada"></div>
<div style="left:235px;top:236px;width:11px;height:11px;background:#fff"></div>
<div style="left:235px;top:247px;width:11px;height:292px;background:#fff;border:1px solid #cfcfcf"></div>
<div style="left:235px;top:700px;width:11px;height:11px;background:#fff"></div>
<svg style="left:235px;top:236px;" width="11" height="11" viewBox="0 0 11 11"><path d="M3 7H8L5.5 4Z" fill="#666"/></svg>
<svg style="left:235px;top:700px;" width="11" height="11" viewBox="0 0 11 11"><path d="M3 4H8L5.5 7Z" fill="#666"/></svg>
<div style="left:248px;top:236px;width:1px;height:475px;background:#d9d9d9"></div>
<span class="t" style="left:124px;top:248.00px;font-size:10px;color:#c43e1c;transform:scaleX(1.0430);transform-origin:0 0;">1</span>
<span class="t" style="left:124px;top:308.00px;font-size:10px;color:#555;transform:scaleX(1.0430);transform-origin:0 0;">2</span>
<span class="t" style="left:124px;top:368.00px;font-size:10px;color:#555;transform:scaleX(1.0430);transform-origin:0 0;">3</span>
<span class="t" style="left:124px;top:427.00px;font-size:10px;color:#555;transform:scaleX(1.0430);transform-origin:0 0;">4</span>
<span class="t" style="left:124px;top:487.00px;font-size:10px;color:#555;transform:scaleX(1.0430);transform-origin:0 0;">5</span>
<span class="t" style="left:124px;top:546.00px;font-size:10px;color:#555;transform:scaleX(1.0430);transform-origin:0 0;">6</span>
<span class="t" style="left:124px;top:606.00px;font-size:10px;color:#555;transform:scaleX(1.0430);transform-origin:0 0;">7</span>
<span class="t" style="left:124px;top:666.00px;font-size:10px;color:#555;transform:scaleX(1.0430);transform-origin:0 0;">8</span>
<div style="left:139px;top:247px;width:83px;height:49px;border:2px solid #b7472a;background:#fff"></div>
<div style="left:141px;top:249px;width:79px;height:45px;overflow:hidden;background:#fff"><span class="t" style="left:12px;top:6px;font-size:5.5px;color:#3d7bc6;transform:scaleX(.97);transform-origin:0 0">National Public Policy for</span><span class="t" style="left:15px;top:13px;font-size:5.5px;color:#3d7bc6">harnessing Renewable</span><span class="t" style="left:34px;top:20px;font-size:5.5px;color:#3d7bc6">Energy</span><div style="left:47px;top:32px;width:28px;height:1px;background:#b8c4e8"></div><div style="left:64px;top:35px;width:11px;height:1px;background:#b8c4e8"></div></div>
<div style="left:141px;top:309px;width:79px;height:45px;overflow:hidden;background:#fff;box-shadow:0 0 0 1px #d2d2d2"><div style="left:0;top:0;width:79px;height:45px;background:radial-gradient(ellipse at 50% 45%,#fff 45%,#d6d6d6 100%)"></div><span class="t" style="left:6px;top:2px;font-size:4.3px;font-weight:bold;color:#111;transform:scaleX(0.796);transform-origin:0 0">Establishment of Online Service Centers</span><span class="t" style="left:7px;top:6.5px;font-size:4.3px;font-weight:bold;color:#111;transform:scaleX(0.830);transform-origin:0 0">(citizen service centers) in PPP Model</span><div style="left:3px;top:12.5px;width:70px;height:1px;background:#a8a8a8"></div><div style="left:3px;top:14.5px;width:40px;height:1px;background:#a8a8a8"></div><div style="left:3px;top:17.5px;width:68px;height:1px;background:#a8a8a8"></div><div style="left:3px;top:19.5px;width:66px;height:1px;background:#a8a8a8"></div><div style="left:3px;top:21.5px;width:40px;height:1px;background:#a8a8a8"></div><div style="left:3px;top:24.5px;width:70px;height:1px;background:#a8a8a8"></div><div style="left:3px;top:26.5px;width:56px;height:1px;background:#a8a8a8"></div><div style="left:3px;top:29.5px;width:66px;height:1px;background:#a8a8a8"></div><div style="left:3px;top:31.5px;width:30px;height:1px;background:#a8a8a8"></div><div style="left:3px;top:34.5px;width:68px;height:1px;background:#a8a8a8"></div><div style="left:3px;top:36.5px;width:30px;height:1px;background:#a8a8a8"></div></div>
<div style="left:141px;top:368.5px;width:79px;height:45px;overflow:hidden;background:#fff;box-shadow:0 0 0 1px #d2d2d2"><svg style="left:0;top:0" width="79" height="45"><path d="M40 6.8L54.5 14.5L54 31L40 38.5L26 30.5L26.5 14.5Z" fill="none" stroke="#9ad0e8" stroke-width="1"/></svg><div style="left:32px;top:15px;width:16px;height:16px;border-radius:50%;background:#a6a6a6"></div><div style="left:34.8px;top:1.5999999999999996px;width:10.4px;height:10.4px;border-radius:50%;background:#f6c400"></div><div style="left:49.5px;top:9.5px;width:10px;height:10px;border-radius:50%;background:#a6e22e"></div><div style="left:49px;top:26px;width:10px;height:10px;border-radius:50%;background:#22d422"></div><div style="left:34.8px;top:33.3px;width:10.4px;height:10.4px;border-radius:50%;background:#2ed87a"></div><div style="left:20.8px;top:25.3px;width:10.4px;height:10.4px;border-radius:50%;background:#34d0c8"></div><div style="left:21.3px;top:9.3px;width:10.4px;height:10.4px;border-radius:50%;background:#4a9ee8"></div><div style="left:13px;top:3.5px;width:8px;height:8px;border-radius:50%;border:1.5px solid #222"></div><div style="left:60px;top:15px;width:8px;height:7px;border-radius:50%;background:#8b7ac8"></div><div style="left:60px;top:33px;width:8px;height:7px;border-radius:50%;background:#f0a040"></div><div style="left:25px;top:39px;width:6px;height:6px;background:#222"></div><div style="left:15px;top:24px;width:4px;height:6px;background:#9aa0d0"></div><div style="left:47px;top:0px;width:6px;height:5px;background:#333;border-radius:40%"></div></div>
<div style="left:141px;top:428px;width:79px;height:45px;overflow:hidden;background:#fff;box-shadow:0 0 0 1px #d2d2d2"><div style="left:1px;top:2px;width:36px;height:2px;background:#e02020"></div><div style="left:1px;top:8px;width:6px;height:11px;background:#f0a060"></div><div style="left:7px;top:14px;width:14px;height:12px;border-radius:50%;border:2px solid #f09050"></div><div style="left:20px;top:22px;width:10px;height:10px;background:#1e4a8a;border-radius:2px"></div><div style="left:33px;top:6px;width:13px;height:7px;border-radius:50%;background:#5a5a5a"></div><div style="left:42px;top:20px;width:9px;height:7px;border-radius:50%;background:#5a5a5a"></div><div style="left:33px;top:32px;width:14px;height:8px;border-radius:50%;background:#5a5a5a"></div><div style="left:57px;top:36px;width:13px;height:8px;border-radius:50%;background:#5a5a5a"></div><div style="left:58px;top:2px;width:8px;height:7px;border-radius:50%;background:#6c8ce0"></div><div style="left:70px;top:8px;width:7px;height:8px;border-radius:50%;background:#6c8ce0"></div><div style="left:49px;top:8px;width:8px;height:3px;background:#6a8ad8"></div><div style="left:30px;top:17px;width:5px;height:3px;background:#6a8ad8"></div><div style="left:37px;top:23px;width:6px;height:3px;background:#6a8ad8"></div><div style="left:52px;top:18px;width:10px;height:3px;background:#6a8ad8"></div><div style="left:52px;top:24px;width:10px;height:3px;background:#6a8ad8"></div><div style="left:50px;top:28px;width:6px;height:3px;background:#6a8ad8"></div><div style="left:31px;top:31px;width:5px;height:3px;background:#6a8ad8"></div><div style="left:71px;top:20px;width:5px;height:4px;background:#333"></div><div style="left:70px;top:27px;width:6px;height:8px;background:#222"></div><div style="left:1px;top:24px;width:10px;height:18px;background:repeating-linear-gradient(#bbb 0 1px,transparent 1px 4px)"></div></div>
<div style="left:141px;top:488px;width:79px;height:45px;overflow:hidden;background:#fff;box-shadow:0 0 0 1px #d2d2d2"><div style="left:4px;top:1.5px;width:38px;height:1px;background:#f07070"></div><div style="left:43px;top:1.5px;width:31px;height:1px;background:#555"></div><div style="left:23px;top:4px;width:34px;height:1px;background:#555"></div><div style="left:3px;top:8px;width:10px;height:1px;background:#777"></div><div style="left:3px;top:10px;width:20px;height:1px;background:#666"></div><div style="left:3px;top:11.5px;width:70px;height:1px;background:#c4c4c4"></div><div style="left:3px;top:13px;width:40px;height:1px;background:#c4c4c4"></div><div style="left:3px;top:16px;width:18px;height:1px;background:#666"></div><div style="left:3px;top:17.5px;width:70px;height:1px;background:#c4c4c4"></div><div style="left:3px;top:19px;width:40px;height:1px;background:#c4c4c4"></div><div style="left:3px;top:22px;width:70px;height:1px;background:#555"></div><div style="left:3px;top:24px;width:72px;height:1px;background:#bbb"></div><div style="left:3px;top:25.5px;width:72px;height:1px;background:#c4c4c4"></div><div style="left:3px;top:27px;width:70px;height:1px;background:#bbb"></div><div style="left:3px;top:28.5px;width:40px;height:1px;background:#c4c4c4"></div><div style="left:3px;top:32px;width:42px;height:1px;background:#bbb"></div></div>
<div style="left:141px;top:547.5px;width:79px;height:45px;overflow:hidden;background:#fff;box-shadow:0 0 0 1px #d2d2d2"><div style="left:3px;top:3px;width:22px;height:1px;background:#666"></div><div style="left:3px;top:3px;width:68px;height:1px;background:#bbb"></div><div style="left:3px;top:5px;width:68px;height:1px;background:#c8c8c8"></div><div style="left:3px;top:7px;width:30px;height:1px;background:#c8c8c8"></div><div style="left:3px;top:10px;width:70px;height:1px;background:#bbb"></div><div style="left:3px;top:12px;width:20px;height:1px;background:#c8c8c8"></div><div style="left:3px;top:15px;width:30px;height:1px;background:#bbb"></div><div style="left:3px;top:19px;width:55px;height:1px;background:#c4c4c4"></div><div style="left:3px;top:22px;width:68px;height:1px;background:#c4c4c4"></div><div style="left:3px;top:24px;width:40px;height:1px;background:#c8c8c8"></div><div style="left:3px;top:27px;width:50px;height:1px;background:#bbb"></div><div style="left:3px;top:31px;width:68px;height:1px;background:#c4c4c4"></div><div style="left:3px;top:33px;width:68px;height:1px;background:#c8c8c8"></div></div>
<div style="left:141px;top:607px;width:79px;height:45px;overflow:hidden;background:#fff;box-shadow:0 0 0 1px #d2d2d2"><div style="left:1px;top:1px;width:15px;height:6px;background:#3a6fd0"></div><div style="left:2px;top:7px;width:1px;height:35px;background:#3a6fd0"></div><div style="left:4px;top:11px;width:26px;height:5px;border:1px solid #c8d4e8"></div><div style="left:4px;top:18px;width:26px;height:5px;border:1px solid #c8d4e8"></div><div style="left:4px;top:27px;width:26px;height:5px;border:1px solid #c8d4e8"></div><div style="left:4px;top:36px;width:26px;height:5px;border:1px solid #c8d4e8"></div><div style="left:33px;top:17px;width:18px;height:13px;border-radius:50%;background:#eee"></div><span class="t" style="left:37px;top:18px;font-size:4px;color:#888">Green<br>office</span><div style="left:33px;top:5px;width:5px;height:6px;border-radius:50%;border:1px solid #2a8a4a"></div><div style="left:48px;top:5px;width:4px;height:4px;border-radius:50%;background:#e04040"></div><div style="left:54px;top:13px;width:6px;height:6px;border-radius:50%;background:#3a9a3a"></div><div style="left:47px;top:30px;width:6px;height:7px;border-radius:40%;background:#222"></div><div style="left:20px;top:3px;width:10px;height:1px;background:#888"></div><div style="left:20px;top:5px;width:8px;height:1px;background:#888"></div><div style="left:55px;top:5px;width:16px;height:1px;background:#888"></div><div style="left:60px;top:14px;width:14px;height:1px;background:#888"></div><div style="left:60px;top:16px;width:12px;height:1px;background:#888"></div><div style="left:59px;top:23px;width:14px;height:1px;background:#888"></div><div style="left:60px;top:25px;width:12px;height:1px;background:#888"></div><div style="left:60px;top:27px;width:12px;height:1px;background:#888"></div><div style="left:33px;top:33px;width:10px;height:1px;background:#888"></div></div>
<div style="left:141px;top:667px;width:79px;height:45px;overflow:hidden;background:#fff;box-shadow:0 0 0 1px #d2d2d2"><div style="left:21px;top:10px;width:38px;height:36px;border:1.5px solid #f3d08a;border-radius:50%"></div><div style="left:31.5px;top:16.5px;width:17.0px;height:17.0px;border-radius:50%;border:1.5px solid #e8c050;background:#fff"></div><div style="left:34.5px;top:0.5px;width:11.0px;height:11.0px;border-radius:50%;border:1.5px solid #e8c050;background:#fff"></div><div style="left:49.5px;top:12.5px;width:11.0px;height:11.0px;border-radius:50%;border:1.5px solid #e8c050;background:#fff"></div><div style="left:44.5px;top:30.5px;width:11.0px;height:11.0px;border-radius:50%;border:1.5px solid #e8c050;background:#fff"></div><div style="left:24.5px;top:30.5px;width:11.0px;height:11.0px;border-radius:50%;border:1.5px solid #e8c050;background:#fff"></div><div style="left:16.5px;top:12.5px;width:11.0px;height:11.0px;border-radius:50%;border:1.5px solid #e8c050;background:#fff"></div><div style="left:49px;top:1px;width:10px;height:5px;border-radius:50%;background:#3a9a20;border:1px solid #222"></div><div style="left:63px;top:18px;width:6px;height:6px;border-radius:50%;background:#60c060"></div><div style="left:8px;top:8px;width:7px;height:3px;background:#60b060;border-radius:50%"></div><div style="left:8px;top:31px;width:6px;height:6px;border-radius:50%;background:#666"></div></div>
<div style="left:115px;top:711px;width:133px;height:1px;background:#d6d6d6"></div>
<div style="left:338px;top:242px;width:813px;height:459px;background:#fff;border:1px solid #d6d6d8"></div>
<span class="t" style="left:458.71px;top:311.00px;font-size:55px;color:#1070c4;transform:scaleX(1.0098);transform-origin:0 0;">National Public Policy for</span>
<div style="left:458.71px;top:358px;width:634.29px;height:18px;overflow:hidden;-webkit-mask-image:linear-gradient(rgba(0,0,0,.62),rgba(0,0,0,.25) 45%,transparent 100%)"><span class="t" style="left:0;top:-47px;font-size:55px;color:#1070c4;transform-origin:0 46px;transform:scaleX(1.0098) scaleY(-1)">National Public Policy for</span></div>
<span class="t" style="left:489.41px;top:384.00px;font-size:55px;color:#1070c4;transform:scaleX(0.9882);transform-origin:0 0;">harnessing Renewable</span>
<div style="left:489.41px;top:431px;width:572.88px;height:18px;overflow:hidden;-webkit-mask-image:linear-gradient(rgba(0,0,0,.62),rgba(0,0,0,.25) 45%,transparent 100%)"><span class="t" style="left:0;top:-47px;font-size:55px;color:#1070c4;transform-origin:0 46px;transform:scaleX(0.9882) scaleY(-1)">harnessing Renewable</span></div>
<span class="t" style="left:682.92px;top:458.00px;font-size:55px;color:#1070c4;transform:scaleX(0.9571);transform-origin:0 0;">Energy</span>
<div style="left:682.92px;top:505px;width:186.78px;height:18px;overflow:hidden;-webkit-mask-image:linear-gradient(rgba(0,0,0,.62),rgba(0,0,0,.25) 45%,transparent 100%)"><span class="t" style="left:0;top:-47px;font-size:55px;color:#1070c4;transform-origin:0 46px;transform:scaleX(0.9571) scaleY(-1)">Energy</span></div>
<span class="t" style="left:817.9px;top:563.00px;font-size:17px;color:#1f6fbe;transform:scaleX(1.0758);transform-origin:0 0;">By Shraddha Verma (Team member)</span>
<span class="t" style="left:991px;top:594.00px;font-size:17px;color:#1f6fbe;transform:scaleX(1.0817);transform-origin:0 0;">(Team Planner)</span>
<div style="left:1238px;top:236px;width:12px;height:475px;background:#e6e6e8"></div>
<div style="left:1238px;top:247px;width:11px;height:35px;background:#fff;border:1px solid #cfcfcf"></div>
<div style="left:1238px;top:282px;width:11px;height:377px;background:#dadada"></div>
<div style="left:1238px;top:236px;width:11px;height:11px;background:#fff"></div>
<div style="left:1238px;top:659px;width:11px;height:11px;background:#fff"></div>
<svg style="left:1238px;top:236px;" width="11" height="11" viewBox="0 0 11 11"><path d="M3 7H8L5.5 4Z" fill="#666"/></svg>
<svg style="left:1238px;top:659px;" width="11" height="11" viewBox="0 0 11 11"><path d="M3 4H8L5.5 7Z" fill="#666"/></svg>
<svg style="left:1238px;top:672px;" width="11" height="22" viewBox="0 0 11 22"><path d="M2.5 4.5L5.5 1.5L8.5 4.5Z" fill="#555"/><path d="M2.5 7.5L5.5 4.5L8.5 7.5Z" fill="#555"/><path d="M2.5 8.5H8.5" stroke="#555" stroke-width="1"/><path d="M2.5 13.5H8.5" stroke="#555" stroke-width="1"/><path d="M2.5 14.5L5.5 17.5L8.5 14.5Z" fill="#555"/><path d="M2.5 17.5L5.5 20.5L8.5 17.5Z" fill="#555"/></svg>
<div style="left:115px;top:710px;width:1135px;height:1px;background:#c9c9c9"></div>
<div style="left:115px;top:711px;width:1135px;height:1px;background:#e6e6e8"></div>
<div style="left:115px;top:712px;width:1135px;height:1px;background:#d6d6d8"></div>
<div style="left:115px;top:713px;width:1135px;height:14px;background:#f3f3f3"></div>
<span class="t" style="left:121.2px;top:717.00px;font-size:8px;color:#555;transform:scaleX(0.9601);transform-origin:0 0;">Slide 1 of 12</span>
<svg style="left:177px;top:714px;" width="13" height="11" viewBox="0 0 13 11"><path d="M1.5 1.5H5.5L6.5 2.5L7.5 1.5H11.5V9.5H7.5L6.5 10.5L5.5 9.5H1.5Z" fill="none" stroke="#777" stroke-width=".8"/><path d="M6.5 2.5V9.5" stroke="#777" stroke-width=".8"/><path d="M8 7L11 3" stroke="#777"/></svg>
<span class="t" style="left:202px;top:717.00px;font-size:8px;color:#555;transform:scaleX(0.9270);transform-origin:0 0;">English (India)</span>
<svg style="left:875px;top:713px;" width="12" height="12" viewBox="0 0 12 12"><path d="M2.5 6L6 2.5L9.5 6Z" fill="#777"/><path d="M1.5 8H10.5M1.5 10.5H10.5" stroke="#777"/></svg>
<span class="t" style="left:888.5px;top:717.00px;font-size:8px;color:#555;transform:scaleX(0.9762);transform-origin:0 0;">Notes</span>
<svg style="left:923px;top:713px;" width="12" height="13" viewBox="0 0 12 13"><path d="M1 1.5H11V8.5H5L3 11V8.5H1Z" fill="#666"/></svg>
<span class="t" style="left:936.4px;top:717.00px;font-size:8px;color:#555;transform:scaleX(0.9334);transform-origin:0 0;">Comments</span>
<div style="left:987.4px;top:712px;width:28.6px;height:15.5px;background:#c8c8c8"></div>
<svg style="left:995px;top:713px;" width="13" height="12" viewBox="0 0 13 12"><rect x="1.5" y="1.5" width="10" height="9" fill="none" stroke="#777"/><path d="M3.5 3.5H9.5V6.5H3.5Z" fill="none" stroke="#777" stroke-width=".8"/></svg>
<svg style="left:1025px;top:713px;" width="12" height="12" viewBox="0 0 12 12"><rect x="1.5" y="1.5" width="4" height="3.5" fill="none" stroke="#888" stroke-width=".8"/><rect x="7.5" y="1.5" width="4" height="3.5" fill="none" stroke="#888" stroke-width=".8"/><rect x="1.5" y="7" width="4" height="3.5" fill="none" stroke="#888" stroke-width=".8"/><rect x="7.5" y="7" width="4" height="3.5" fill="none" stroke="#888" stroke-width=".8"/></svg>
<svg style="left:1054px;top:713px;" width="13" height="12" viewBox="0 0 13 12"><path d="M1.5 2.5H5.5L6.5 3.5L7.5 2.5H11.5V10H1.5Z" fill="none" stroke="#888" stroke-width=".8"/><path d="M6.5 3.5V10" stroke="#888" stroke-width=".8"/></svg>
<svg style="left:1084px;top:713px;" width="13" height="12" viewBox="0 0 13 12"><path d="M1 1.5H12" stroke="#888"/><rect x="2.5" y="2.5" width="8" height="5" fill="none" stroke="#888" stroke-width=".8"/><path d="M6.5 7.5V11M4.5 11H8.5" stroke="#888" stroke-width=".8"/></svg>
<svg style="left:1108px;top:716px;" width="8" height="8" viewBox="0 0 8 8"><path d="M1 4H7" stroke="#999"/></svg>
<div style="left:1119px;top:719.5px;width:73.5px;height:1px;background:#aaa"></div>
<div style="left:1149.2px;top:716px;width:3px;height:8px;background:#777"></div>
<div style="left:1155px;top:717.5px;width:1px;height:4px;background:#aaa"></div>
<svg style="left:1195px;top:715px;" width="9" height="9" viewBox="0 0 9 9"><path d="M1 4.5H8M4.5 1V8" stroke="#999"/></svg>
<span class="t" style="left:1211px;top:717.00px;font-size:8px;color:#555;transform:scaleX(0.8931);transform-origin:0 0;">86%</span>
<svg style="left:1236px;top:715px;" width="10" height="10" viewBox="0 0 10 10"><rect x="1" y="1" width="8" height="8" fill="#8c8c8c"/><rect x="2" y="2" width="6" height="6" fill="#dcdcdc"/><path d="M2 2L8 8M8 2L2 8" stroke="#9a9a9a" stroke-width="1.2"/><path d="M2 2h2v2h-2zM6 2h2v2h-2zM2 6h2v2h-2zM6 6h2v2h-2z" fill="#fff"/></svg>
<div style="left:115px;top:727px;width:1135px;height:1px;background:#fafafa"></div>
<svg style="left:310px;top:318px;" width="10" height="14" viewBox="0 0 10 14"><path d="M1.5 1.2V10.8L3.8 8.6L5.6 12.2L7.2 11.4L5.5 7.9H8.6Z" fill="#fff" stroke="#2a2a30" stroke-width="1" stroke-linejoin="round"/></svg>
<div style="left:0px;top:728px;width:1366px;height:40px;background:linear-gradient(90deg,#243a46 0%,#22363f 35%,#1f2f42 65%,#1c2a44 100%)"></div>
<svg style="left:14px;top:738px;" width="20" height="20" viewBox="0 0 20 20"><path d="M2 3.8L8.6 2.8V9.3H2Z" fill="#fff"/><path d="M9.6 2.6L18.2 1.5V9.3H9.6Z" fill="#fff"/><path d="M2 10.3H8.6V16.9L2 16Z" fill="#fff"/><path d="M9.6 10.3H18.2V18.2L9.6 17Z" fill="#fff"/></svg>
<svg style="left:60px;top:737px;" width="24" height="22" viewBox="0 0 24 22"><circle cx="14.1" cy="8.8" r="5.5" fill="none" stroke="#fff" stroke-width="1.3"/><path d="M10.2 12.7L4 18.8" stroke="#fff" stroke-width="1.4"/></svg>
<svg style="left:110px;top:738px;" width="20" height="20" viewBox="0 0 20 20"><rect x="3" y="5.5" width="10" height="9" fill="none" stroke="#fff" stroke-width="1.2"/><path d="M2 2.5H3.5V3.5H12.5V2.5H14M2 17.5H3.5V16.5H12.5V17.5H14" stroke="#fff" stroke-width="1" fill="none"/><path d="M16.5 4V5.5" stroke="#fff" stroke-width="1.5"/><path d="M16.5 7.5V17" stroke="#fff" stroke-width="1.3"/></svg>
<svg style="left:158px;top:735px;" width="26" height="26" viewBox="0 0 26 26"><defs><radialGradient id="ff1" cx="70%" cy="20%" r="90%"><stop offset="0" stop-color="#fff44f"/><stop offset=".35" stop-color="#ff9a2a"/><stop offset=".7" stop-color="#ff3a3a"/><stop offset="1" stop-color="#e31587"/></radialGradient><radialGradient id="ff2" cx="40%" cy="30%" r="80%"><stop offset="0" stop-color="#b07cf0"/><stop offset="1" stop-color="#5a2bd0"/></radialGradient></defs><path d="M13 24.5A11 11 0 0 1 2.5 11.5C3 9 4 7.5 5 6.5C5 8 5.5 9 6.5 9.5C7 7 9 5 11 4.5C10.5 6 11 7 12 7.5C13 5.5 15 3.5 18.5 1.5C18 3.5 19.5 5 21 6.5C23 8.5 24 11 24 13.5A11 11 0 0 1 13 24.5Z" fill="url(#ff1)"/><circle cx="13" cy="13.5" r="5.5" fill="url(#ff2)"/><path d="M7 10C9 8.5 12 8 14 9.5C11 9.5 9 11 8.5 13Z" fill="#ff8a2a"/></svg>
<svg style="left:208px;top:737px;" width="24" height="24" viewBox="0 0 24 24"><path d="M12 12L12 1A11 11 0 0 1 21.5 6.5Z" fill="#db4437"/><path d="M12 1A11 11 0 0 0 2.5 6.5L12 12Z" fill="#db4437"/><path d="M2.5 6.5A11 11 0 0 0 12 23L12 12Z" fill="#0f9d58"/><path d="M12 23A11 11 0 0 0 21.5 6.5L12 12Z" fill="#ffcd40"/><circle cx="12" cy="12" r="5.2" fill="#fff"/><circle cx="12" cy="12" r="4" fill="#4285f4"/></svg>
<svg style="left:256px;top:736px;" width="26" height="24" viewBox="0 0 26 24"><path d="M2 3.5L11.5 1.5V23L2 21Z" fill="#0a64c8"/><rect x="11.5" y="6" width="12.5" height="11" fill="#0f78d4"/><path d="M11.5 6.5L17.7 12L24 6.5" stroke="#fff" stroke-width="1.2" fill="none"/><rect x="11.5" y="6" width="12.5" height="11" fill="none" stroke="#fff" stroke-width=".6"/><ellipse cx="6.8" cy="12" rx="2.8" ry="3.6" fill="none" stroke="#fff" stroke-width="1.6"/></svg>
<svg style="left:304px;top:736px;" width="28" height="26" viewBox="0 0 28 26"><circle cx="13" cy="3.5" r="2.7" fill="#7b83eb"/><circle cx="20.7" cy="4.8" r="2.2" fill="#5059c9"/><path d="M8 8.5H17.5V18A5 5 0 0 1 8 18Z" fill="#7b83eb"/><path d="M18 8.5H24V15A3 3 0 0 1 18 15Z" fill="#5059c9"/><rect x="0.5" y="5" width="11.5" height="11.5" fill="#4b53bc"/><path d="M3 7.5H9.5M6.2 7.5V14" stroke="#fff" stroke-width="1.6"/><circle cx="21" cy="19" r="5" fill="#6bb700" stroke="#223" stroke-width="1"/><path d="M18.5 19L20.3 20.8L23.5 17.5" stroke="#fff" stroke-width="1.2" fill="none"/></svg>
<svg style="left:355px;top:738px;" width="24" height="20" viewBox="0 0 24 20"><path d="M1 2.5H7.5L9 4H23V18.5H1Z" fill="#f8c64a"/><path d="M1 4H9.5L11 2.5H23V18.5H1Z" fill="#fcd35c"/><rect x="1" y="5.5" width="22" height="13" fill="#fbd35f"/><rect x="1" y="4" width="22" height="1.6" fill="#e9b32e"/><path d="M6.5 18.5V12.5H17.5V18.5H14.5V15.5H9.5V18.5Z" fill="#1f86d9"/></svg>
<svg style="left:403px;top:736px;" width="26" height="24" viewBox="0 0 26 24"><path d="M1.5 3L14 1V23L1.5 21Z" fill="#2b579a"/><rect x="14" y="4" width="9.5" height="16" fill="#fff"/><path d="M15 6.5H22.5M15 9H22.5M15 11.5H22.5M15 14H22.5M15 16.5H22.5" stroke="#2b579a" stroke-width="1"/><path d="M3.5 8L5.3 16L7.5 10L9.7 16L11.5 8" stroke="#fff" stroke-width="1.3" fill="none"/></svg>
<svg style="left:452px;top:736px;" width="26" height="24" viewBox="0 0 26 24"><path d="M1.5 3L14 1V23L1.5 21Z" fill="#217346"/><rect x="14" y="4" width="9.5" height="16" fill="#fff"/><path d="M15 6.5H22.5M15 9.5H22.5M15 12.5H22.5M15 15.5H22.5M18.5 5V19" stroke="#217346" stroke-width="1"/><path d="M4 8L10.5 16.5M10.5 8L4 16.5" stroke="#fff" stroke-width="1.6"/></svg>
<svg style="left:501px;top:736px;" width="26" height="24" viewBox="0 0 26 24"><path d="M1.5 3L14 1V23L1.5 21Z" fill="#d24726"/><rect x="14" y="4" width="9.5" height="16" fill="#fff"/><path d="M16 12A4 4 0 1 0 20.5 7.5V12Z" fill="#d24726"/><path d="M15.5 15H22.5M15.5 17.5H22.5" stroke="#d24726"/><path d="M5 16.5V7.5H8.5A2.5 2.5 0 0 1 8.5 12.5H5" stroke="#fff" stroke-width="1.6" fill="none"/></svg>
<svg style="left:550px;top:735px;" width="26" height="26" viewBox="0 0 26 26"><defs><linearGradient id="eg1" x1="0" y1="0" x2="1" y2="1"><stop offset="0" stop-color="#35c1f1"/><stop offset=".6" stop-color="#39b6e0"/><stop offset="1" stop-color="#66eb6e"/></linearGradient><linearGradient id="eg2" x1="0" y1="0" x2="1" y2="1"><stop offset="0" stop-color="#0c59a4"/><stop offset="1" stop-color="#114a8b"/></linearGradient></defs><path d="M2 11A11 11 0 0 1 24 12.5C24 16 21 17.5 18 17.5C15 17.5 13 16 13 14C13 13 14 12.5 14 11.5C14 8 10 6 6.5 6.5C4 7 2.5 9 2 11Z" fill="url(#eg1)"/><path d="M2 11C1.5 18 6.5 24 13 24.5C17 24.8 20.5 23 22.5 20C20 21.5 16 21.5 13 19.5C9 17 9 12 13 9.5C9.5 7 4 7.5 2 11Z" fill="url(#eg2)"/></svg>
<div style="left:588px;top:728px;width:48px;height:40px;background:rgba(255,255,255,.16)"></div>
<svg style="left:600px;top:736px;" width="24" height="23" viewBox="0 0 24 23"><rect x="0.5" y="0.5" width="23" height="22" rx="6" fill="#3c8cf6"/><rect x="4.5" y="7.5" width="10" height="8" rx="1.5" fill="#fff"/><path d="M15 10L19.5 7.3V15.7L15 13Z" fill="#fff"/></svg>
<div style="left:200px;top:766px;width:40px;height:2px;background:#76b9ed"></div>
<div style="left:249px;top:766px;width:40px;height:2px;background:#76b9ed"></div>
<div style="left:298px;top:766px;width:40px;height:2px;background:#76b9ed"></div>
<div style="left:396px;top:766px;width:40px;height:2px;background:#76b9ed"></div>
<div style="left:494px;top:766px;width:40px;height:2px;background:#76b9ed"></div>
<div style="left:543px;top:766px;width:40px;height:2px;background:#76b9ed"></div>
<div style="left:588px;top:766px;width:48px;height:2px;background:#76b9ed"></div>
<svg style="left:971px;top:742px;" width="16" height="11" viewBox="0 0 16 11"><path d="M2 8.5L8 2.5L14 8.5" stroke="#fff" stroke-width="1.2" fill="none"/></svg>
<svg style="left:994px;top:739px;" width="18" height="18" viewBox="0 0 18 18"><circle cx="10" cy="2.5" r="1.8" fill="#7b83eb"/><circle cx="15" cy="3.5" r="1.4" fill="#7b83eb"/><path d="M6 6H12.5V13A3 3 0 0 1 6 13Z" fill="#7b83eb"/><rect x="0.5" y="4" width="8" height="8" fill="#4b53bc"/><path d="M2.3 5.8H6.7M4.5 5.8V10.5" stroke="#fff" stroke-width="1.2"/><circle cx="13.5" cy="13" r="3.8" fill="#6bb700" stroke="#1f2f40" stroke-width=".8"/><path d="M11.8 13L13 14.3L15.3 11.8" stroke="#fff" stroke-width="1" fill="none"/></svg>
<svg style="left:1019px;top:739px;" width="15" height="18" viewBox="0 0 15 18"><rect x="4.5" y="1" width="6" height="11" rx="3" fill="#fff"/><path d="M2.5 9A5 5 0 0 0 12.5 9" stroke="#fff" stroke-width="1.2" fill="none"/><path d="M7.5 14V16.5M5 16.5H10" stroke="#fff" stroke-width="1.2"/></svg>
<svg style="left:1042px;top:739px;" width="18" height="18" viewBox="0 0 18 18"><path d="M8.5 1.2L15.5 3.6V9C15.5 12.8 12.6 15.3 8.5 16.9C4.4 15.3 1.5 12.8 1.5 9V3.6Z" fill="#fff" stroke="#000" stroke-width="1.3"/><path d="M8.5 1.5V16.5M1.8 8.5H15.2" stroke="#000" stroke-width="1.1"/><path d="M13.5 8.5L18 17.3H9Z" fill="#f9c51e"/><path d="M13.5 11V14.5M13.5 15.4V16.5" stroke="#111" stroke-width="1.1"/></svg>
<svg style="left:1066px;top:739px;" width="18" height="18" viewBox="0 0 18 18"><rect x="1" y="1.5" width="16" height="15.5" fill="#c8c8c8" stroke="#9a9a9a" stroke-width=".8"/><rect x="2.5" y="3" width="13" height="9" fill="#fff"/><rect x="3.3" y="3.8" width="11.7" height="8" fill="#c4c4c4"/><path d="M3 11.8V3.5H15" stroke="#10109a" stroke-width="1" fill="none"/><rect x="2.5" y="13.2" width="6" height="2.6" fill="#fff"/><rect x="9.5" y="13.2" width="6" height="2.6" fill="#fff"/><path d="M3 13.5V15.5H8M10 13.5V15.5H15" stroke="#10109a" stroke-width="1" fill="none"/></svg>
<svg style="left:1090px;top:739px;" width="18" height="18" viewBox="0 0 18 18"><defs><linearGradient id="jv" x1="0" y1="0" x2="0" y2="1"><stop offset="0" stop-color="#ec7a22"/><stop offset="1" stop-color="#d9600e"/></linearGradient></defs><rect x="1" y="1" width="16" height="16" rx="2.2" fill="url(#jv)"/><path d="M4.5 15H13M5 12.5H12M4 11H10.5M12.5 10.5A1.7 1.7 0 0 1 12 14" stroke="#fff" stroke-width=".9" fill="none"/><path d="M8.5 10Q6.5 8.5 8.5 6.5L11 3.5" stroke="#fff" stroke-width="1.3" fill="none"/></svg>
<svg style="left:1114px;top:742px;" width="18" height="12" viewBox="0 0 18 12"><path d="M4 11A3.5 3.5 0 0 1 3.5 4.5A5 5 0 0 1 12.5 3.5A3.5 3.5 0 0 1 14.5 11Z" fill="#0f78d4"/><path d="M6 11A3 3 0 0 1 8 5.5A4 4 0 0 1 16 8A2.5 2.5 0 0 1 15 11Z" fill="#1490df"/></svg>
<svg style="left:1139px;top:742px;" width="18" height="12" viewBox="0 0 18 12"><rect x="1.5" y="2" width="13" height="8.5" fill="none" stroke="#fff" stroke-width="1.2"/><rect x="3.2" y="3.7" width="9" height="5" fill="#fff"/><rect x="15" y="4.5" width="1.6" height="3.5" fill="#fff"/></svg>
<svg style="left:1165px;top:741px;" width="16" height="16" viewBox="0 0 16 16"><path d="M9.21 11.80A3.5 3.5 0 0 1 12.62 9.50" stroke="#fff" stroke-width="1.1" fill="none"/><path d="M6.58 10.85A6.3 6.3 0 0 1 12.72 6.70" stroke="#fff" stroke-width="1.1" fill="none"/><path d="M3.95 9.89A9.1 9.1 0 0 1 12.82 3.91" stroke="#fff" stroke-width="1.1" fill="none"/><path d="M1.32 8.93A11.9 11.9 0 0 1 12.92 1.11" stroke="#fff" stroke-width="1.1" fill="none"/><circle cx="12.3" cy="13" r="1.4" fill="#fff"/></svg>
<svg style="left:1186px;top:742px;" width="19" height="14" viewBox="0 0 19 14"><path d="M1.5 5H4.5L8.5 1.5V12.5L4.5 9H1.5Z" fill="none" stroke="#fff" stroke-width="1"/><path d="M10.5 5A2.5 2.5 0 0 1 10.5 9M12.5 3.5A5 5 0 0 1 12.5 10.5" stroke="#fff" stroke-width="1" fill="none"/><path d="M14.5 1.5A8 8 0 0 1 14.5 12.5" stroke="#8a96a8" stroke-width="1" fill="none"/></svg>
<span class="t" style="left:1213.5px;top:742.00px;font-size:12px;color:#fff;transform:scaleX(0.8537);transform-origin:0 0;">ENG</span>
<span class="t" style="left:1264px;top:733.00px;font-size:12px;color:#fff;transform:scaleX(0.8659);transform-origin:0 0;">09:31</span>
<span class="t" style="left:1250.2px;top:751.00px;font-size:12px;color:#fff;transform:scaleX(0.9091);transform-origin:0 0;">10-04-2021</span>
<svg style="left:1324px;top:739px;" width="28" height="27" viewBox="0 0 28 27"><path d="M1.5 1.5H17V13H5L1.5 16Z" fill="#fff"/><path d="M4 4.5H14M4 7H14M4 9.5H14" stroke="#223" stroke-width="1"/><circle cx="16.5" cy="16.8" r="9.6" fill="#2a2e36" stroke="#5c6068" stroke-width="1.6"/></svg>
<span class="t" style="left:1333.5px;top:751.00px;font-size:10.5px;color:#fff;transform:scaleX(1.1132);transform-origin:0 0;">22</span>
<div style="left:1361px;top:728px;width:1px;height:40px;background:#5a6678"></div>
</body></html>
